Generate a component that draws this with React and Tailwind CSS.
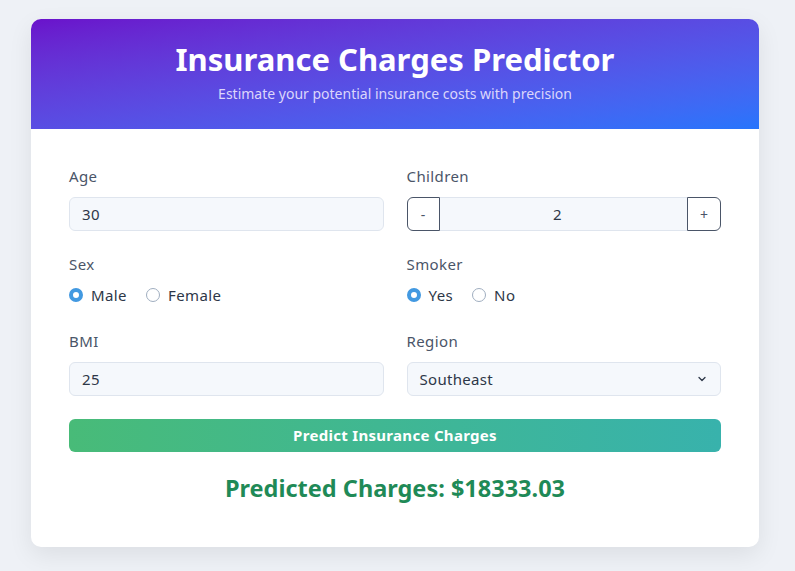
import { useState } from "react";

const font = "font-['Noto_Sans',sans-serif]";

function Label({ children }) {
    return <div className="text-[15px] leading-[20px] tracking-[0.4px] text-[#4a5568] mb-[11px]">{children}</div>;
}

function Radio({ checked, label }) {
    return (
        <label className="flex items-center gap-[8px] text-[15px] leading-[20px] tracking-[0.4px] text-[#2d3748]">
            {checked ? (
                <span className="w-[14px] h-[14px] rounded-full border-[4px] border-[#4299e1] bg-white" />
            ) : (
                <span className="w-[14px] h-[14px] rounded-full border border-[#a0aec0] bg-white" />
            )}
            {label}
        </label>
    );
}

export default function App() {
    const [children, setChildren] = useState(2);

    return (
        <div className={`min-h-[571px] bg-[#eef1f6] pt-[19px] px-[31px] ${font}`}>
            <div className="w-[728px] bg-white rounded-[10px] overflow-hidden shadow-[0_8px_24px_rgba(0,0,0,0.08)]">
                {/* Header */}
                <div className="h-[110px] bg-gradient-to-br from-[#6a11cb] to-[#2575fc] flex flex-col items-center pt-[20px] text-white">
                    <h1 className="text-[31px] leading-[40px] font-bold">Insurance Charges Predictor</h1>
                    <p className="text-[14px] leading-[18px] mt-[6px] text-[#dcd6fb]">Estimate your potential insurance costs with precision</p>
                </div>

                {/* Form */}
                <div className="px-[38px] pt-[37px] pb-[43px]">
                    <div className="grid grid-cols-2 gap-x-[23px]">
                        <div>
                            <Label>Age</Label>
                            <input
                                defaultValue="30"
                                className="w-full h-[34px] px-[12px] bg-[#f5f8fc] border border-[#dfe5ee] rounded-[6px] text-[15px] tracking-[0.3px] text-[#2d3748] outline-none"
                            />
                        </div>
                        <div>
                            <Label>Children</Label>
                            <div className="flex h-[34px]">
                                <button
                                    onClick={() => setChildren(Math.max(0, children - 1))}
                                    className="w-[33px] h-full border border-[#4a5568] rounded-l-[6px] bg-white text-[#4a5568] text-[14px]"
                                >
                                    -
                                </button>
                                <div className="flex-1 h-full flex items-center justify-center pr-[12px] bg-[#f5f8fc] border-y border-[#dfe5ee] text-[15px] text-[#2d3748]">
                                    {children}
                                </div>
                                <button
                                    onClick={() => setChildren(children + 1)}
                                    className="w-[34px] h-full border border-[#4a5568] rounded-r-[6px] bg-white text-[#4a5568] text-[14px]"
                                >
                                    +
                                </button>
                            </div>
                        </div>

                        <div className="mt-[23px]">
                            <Label>Sex</Label>
                            <div className="flex gap-[19px]">
                                <Radio checked label="Male" />
                                <Radio label="Female" />
                            </div>
                        </div>
                        <div className="mt-[23px]">
                            <Label>Smoker</Label>
                            <div className="flex gap-[19px]">
                                <Radio checked label="Yes" />
                                <Radio label="No" />
                            </div>
                        </div>

                        <div className="mt-[26px]">
                            <Label>BMI</Label>
                            <input
                                defaultValue="25"
                                className="w-full h-[34px] px-[12px] bg-[#f5f8fc] border border-[#dfe5ee] rounded-[6px] text-[15px] tracking-[0.3px] text-[#2d3748] outline-none"
                            />
                        </div>
                        <div className="mt-[26px]">
                            <Label>Region</Label>
                            <div className="relative h-[34px] px-[12px] bg-[#f5f8fc] border border-[#dfe5ee] rounded-[6px] flex items-center justify-between text-[15px] tracking-[0.3px] text-[#2d3748]">
                                <span>Southeast</span>
                                <svg width="12" height="12" viewBox="0 0 12 12" fill="none">
                                    <path d="M3 4.5L6 7.5L9 4.5" stroke="#2d3748" strokeWidth="1.3" strokeLinecap="round" strokeLinejoin="round" />
                                </svg>
                            </div>
                        </div>
                    </div>

                    <button className="mt-[23px] w-full h-[33px] rounded-[6px] bg-gradient-to-r from-[#48bb78] to-[#38b2ac] text-white text-[15px] tracking-[0.3px] font-bold">
                        Predict Insurance Charges
                    </button>

                    <div className="mt-[20px] text-center text-[23.5px] leading-[32px] font-bold text-[#1f8a57]">
                        Predicted Charges: $18333.03
                    </div>
                </div>
            </div>
        </div>
    );
}
